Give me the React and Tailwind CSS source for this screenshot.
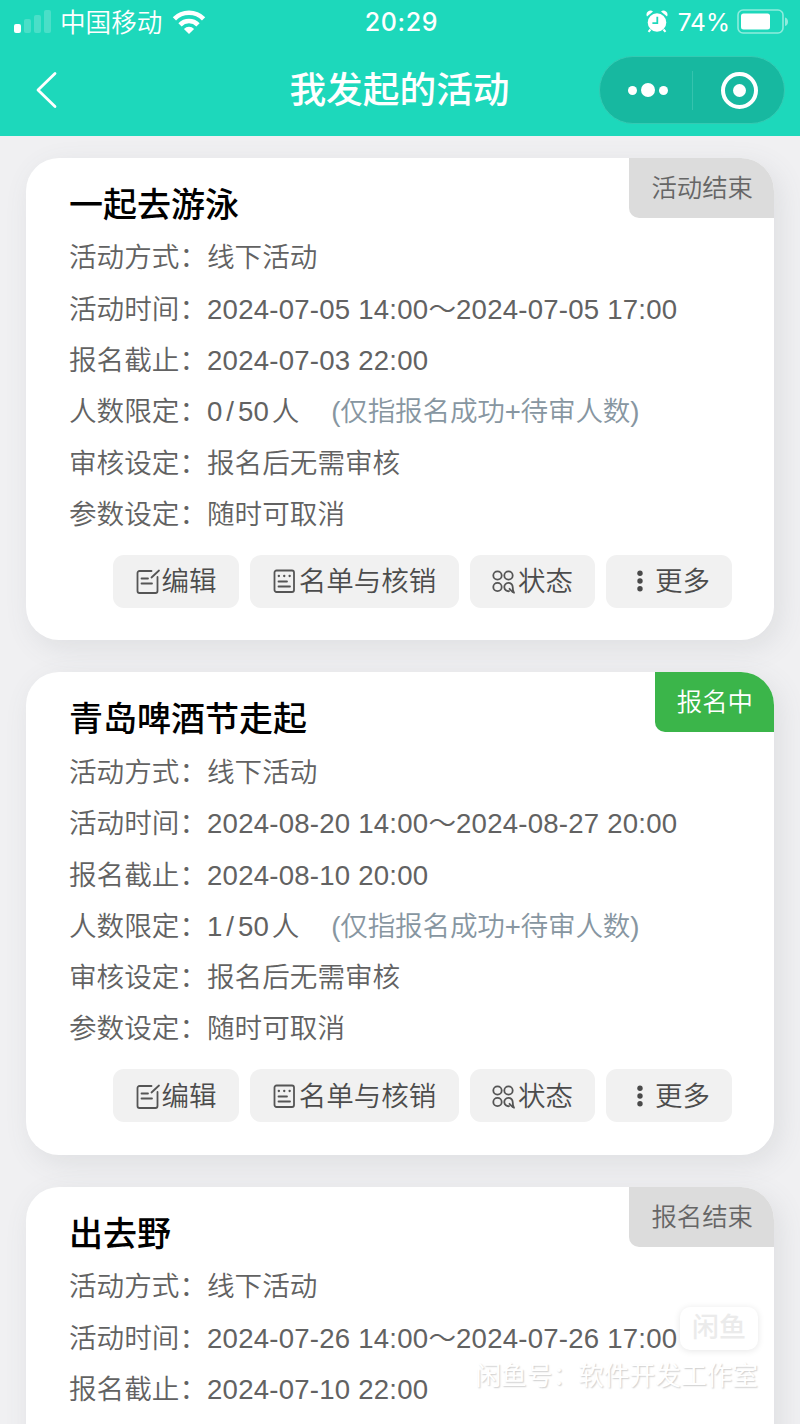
import { clsx } from 'clsx';

const activities = [
    {
        id: 1,
        title: '一起去游泳',
        tag: '活动结束',
        open: false,
        time: ['2024-07-05 14:00', '2024-07-05 17:00'],
        deadline: '2024-07-03 22:00',
        joined: 0,
        limit: 50,
    },
    {
        id: 2,
        title: '青岛啤酒节走起',
        tag: '报名中',
        open: true,
        time: ['2024-08-20 14:00', '2024-08-27 20:00'],
        deadline: '2024-08-10 20:00',
        joined: 1,
        limit: 50,
    },
    {
        id: 3,
        title: '出去野',
        tag: '报名结束',
        open: false,
        time: ['2024-07-26 14:00', '2024-07-26 17:00'],
        deadline: '2024-07-10 22:00',
    },
];

const SignalIcon = () => (
    <svg width="38" height="26" viewBox="0 0 38 26" fill="#fff">
        <rect x="0" y="15" width="7" height="9" rx="2" />
        <rect x="10" y="10" width="7" height="14" rx="2" opacity="0.2" />
        <rect x="20" y="6" width="7" height="18" rx="2" opacity="0.2" />
        <rect x="30" y="1" width="7" height="23" rx="2" opacity="0.2" />
    </svg>
);

const WifiIcon = () => (
    <svg width="34" height="26" viewBox="0 0 34 26" fill="none" stroke="#fff" strokeWidth="4.6">
        <path d="M2.400 9.800a20.600 20.600 0 0 1 29.200 0" />
        <path d="M8 15.800a12.600 12.600 0 0 1 18 0" />
        <path d="M17 25l-5.100-5.100a7.300 7.300 0 0 1 10.200 0z" fill="#fff" stroke="none" />
    </svg>
);

const AlarmIcon = () => (
    <svg width="22" height="24" viewBox="0 0 22 24" fill="none">
        <path d="M1 6.500A4 4 0 0 1 7 1.500zM21 6.500A4 4 0 0 0 15 1.500z" fill="#fff" />
        <path d="M4.500 19.500l-2 2.400M17.500 19.500l2 2.400" stroke="#fff" strokeWidth="2" />
        <circle cx="11" cy="12.500" r="9.300" fill="#fff" />
        <path d="M11.300 6.800v6.400H6.400" stroke="#1dd8bb" strokeWidth="1.800" />
    </svg>
);

const BatteryIcon = () => (
    <svg width="52" height="26" viewBox="0 0 52 26" fill="none">
        <rect x="1" y="1" width="45" height="23" rx="5" stroke="#fff" strokeWidth="1.600" opacity="0.500" />
        <rect x="4" y="4.500" width="29" height="16" rx="2.500" fill="#fff" />
        <path d="M48 8.500c4 1 4 7.500 0 8.500z" fill="#fff" opacity="0.500" />
    </svg>
);

const EditIcon = () => (
    <svg width="25" height="26" viewBox="0 0 25 26" fill="none" stroke="#555" strokeWidth="1.800" strokeLinecap="round">
        <path d="M15.500 3H3.500A2 2 0 0 0 1.500 5v18a2 2 0 0 0 2 2h16a2 2 0 0 0 2-2V9" />
        <path d="M23 2.500l-7.500 7M5.500 10.500h6.500M5.500 15.500h10.500" />
    </svg>
);

const ListIcon = () => (
    <svg width="24" height="26" viewBox="0 0 24 26" fill="none" stroke="#555" strokeWidth="1.800" strokeLinecap="round">
        <rect x="1.500" y="2.500" width="19.500" height="21.500" rx="2" />
        <path d="M5.800 8h.1M11.200 8h.1M16.600 8h.1" strokeWidth="2.300" />
        <path d="M5.500 13.500h8.500M5.500 18.500h11.500" />
    </svg>
);

const StatusIcon = () => (
    <svg width="23" height="26" viewBox="0 0 23 26" fill="none" stroke="#555" strokeWidth="1.800" strokeLinecap="round">
        <circle cx="5.500" cy="7.500" r="4.200" />
        <circle cx="16.500" cy="7.500" r="4.200" />
        <circle cx="5.500" cy="19" r="4.200" />
        <path d="M17 23.200a4.200 4.200 0 1 1 3.700-4.200c0 2.600.2 4.300 1.300 5.800M17.500 20.800l3.300 3.300" />
    </svg>
);

const MoreIcon = () => (
    <svg width="8" height="26" viewBox="0 0 8 26" fill="#4a4a4a">
        <circle cx="4" cy="5.300" r="2.700" />
        <circle cx="4" cy="13" r="2.700" />
        <circle cx="4" cy="20.700" r="2.700" />
    </svg>
);

const Row = ({ label, children }) => (
    <div className="flex h-[51.3px] items-center whitespace-nowrap">
        <span className="w-[138px] shrink-0">{label}：</span>
        {children}
    </div>
);

const Action = ({ className, children }) => (
    <button type="button" className={clsx('flex h-[53px] items-center justify-center rounded-[11px] bg-[#f1f1f1] text-[#4c4c4c]', className)}>
        {children}
    </button>
);

const ActivityCard = ({ item }) => {
    const loaded = item.limit !== undefined;

    return (
        <article className="relative h-[482.300px] shrink-0 rounded-[33px] bg-white pl-[43px] pr-[42px] pt-[20px] shadow-[6px_8px_28px_rgba(90,95,110,0.12)]">
            <span
                className={clsx(
                    'absolute right-0 top-0 flex h-[60px] items-center rounded-tr-[33px] rounded-bl-[10px] pl-[22px] pr-[21px] pt-px text-[25.400px]',
                    item.open ? 'bg-[#3bb54a] text-white' : 'bg-[#dcdcdc] text-[#666]'
                )}
            >
                {item.tag}
            </span>
            <h2 className="flex h-[54px] items-center text-[34px] font-medium text-black">{item.title}</h2>
            <div className="relative top-[0.6px] text-[27.600px] text-[#626262]">
                <Row label="活动方式">线下活动</Row>
                <Row label="活动时间">
                    <span className="tracking-[0.22px]">{item.time[0]}</span>～
                    <span className="tracking-[0.22px]">{item.time[1]}</span>
                </Row>
                <Row label="报名截止">
                    <span className="tracking-[0.22px]">{item.deadline}</span>
                </Row>
                {loaded && (
                    <>
                        <Row label="人数限定">
                            <span>{item.joined}</span>
                            <span className="mx-[4px]">/</span>
                            <span className="mr-[3px]">{item.limit}</span>人
                            <span className="ml-8 tracking-[-0.2px] text-[#8796a1]">(仅指报名成功+待审人数)</span>
                        </Row>
                        <Row label="审核设定">报名后无需审核</Row>
                        <Row label="参数设定">随时可取消</Row>
                    </>
                )}
            </div>
            {loaded && (
                <div className="mt-[15px] flex justify-end gap-[11px] text-[27.500px]">
                    <Action className="w-[126px]"><EditIcon /><span className="ml-px pt-px">编辑</span></Action>
                    <Action className="w-[209px]"><ListIcon /><span className="ml-0.5 pt-px">名单与核销</span></Action>
                    <Action className="w-[125px]"><StatusIcon /><span className="ml-[3px] pt-px">状态</span></Action>
                    <Action className="w-[126px] pl-2"><MoreIcon /><span className="ml-[11px] pt-px">更多</span></Action>
                </div>
            )}
        </article>
    );
};

const App = () => (
    <div className="relative flex h-[1424px] w-[800px] flex-col overflow-hidden bg-[#f0f0f2] font-['Liberation_Sans','Noto_Sans_CJK_SC',sans-serif] font-[350] leading-none">
        <header className="h-[136px] shrink-0 bg-[#1dd8bb] text-white">
            <div className="flex h-[44px] items-center justify-between pl-[14px] pr-[11px]">
                <div className="flex w-[300px] items-center">
                    <SignalIcon />
                    <span className="ml-2 mr-[10px] pt-[3px] text-[25.600px]">中国移动</span>
                    <WifiIcon />
                </div>
                <span className="font-['Inter'] text-[25px] font-medium tracking-[0.6px]">20:29</span>
                <div className="flex w-[300px] items-center justify-end">
                    <AlarmIcon />
                    <span className="ml-[10px] mr-[7px] pt-px font-['Inter'] text-[24.500px] font-normal">74%</span>
                    <BatteryIcon />
                </div>
            </div>
            <div className="flex h-[92px] items-center justify-between pl-[35px] pr-[15px]">
                <div className="w-[165px]">
                    <svg width="22" height="38" viewBox="0 0 22 38" fill="none" stroke="#fff" strokeWidth="2.800" strokeLinecap="round" strokeLinejoin="round">
                        <path d="M20 2.500L3 19l17 16.500" />
                    </svg>
                </div>
                <h1 className="pt-[3px] text-[36.700px] font-medium">我发起的活动</h1>
                <div className="flex h-[68px] w-[186px] items-center rounded-full border border-[#34cab3] bg-[#17b8a0]">
                    <div className="flex w-[92px] items-center justify-center gap-[4px] pl-1">
                        <i className="size-[9px] rounded-full bg-white" />
                        <i className="size-[14px] rounded-full bg-white" />
                        <i className="size-[9px] rounded-full bg-white" />
                    </div>
                    <div className="h-[39px] w-px bg-[#35c3ae]" />
                    <div className="flex flex-1 justify-center pl-0.5">
                        <div className="flex size-[37px] items-center justify-center rounded-full border-[4.500px] border-white">
                            <i className="size-[13px] rounded-full bg-white" />
                        </div>
                    </div>
                </div>
            </div>
        </header>

        <main className="flex flex-col gap-[32.200px] px-[26px] pt-[22px]">
            {activities.map((item) => (
                <ActivityCard key={item.id} item={item} />
            ))}
        </main>

        <div className="absolute bottom-[34px] right-[42px] flex flex-col items-end">
            <div className="flex h-[43px] w-[78px] items-center justify-center rounded-[10px] bg-white text-[27px] font-medium text-[#ebebeb] shadow-[0_1px_7px_rgba(0,0,0,0.1)]">
                闲鱼
            </div>
            <div className="mt-[14px] text-[25.700px] font-normal text-white [text-shadow:1px_1px_1.500px_rgba(0,0,0,0.2)]">
                闲鱼号：软件开发工作室
            </div>
        </div>
    </div>
);

export default App;
